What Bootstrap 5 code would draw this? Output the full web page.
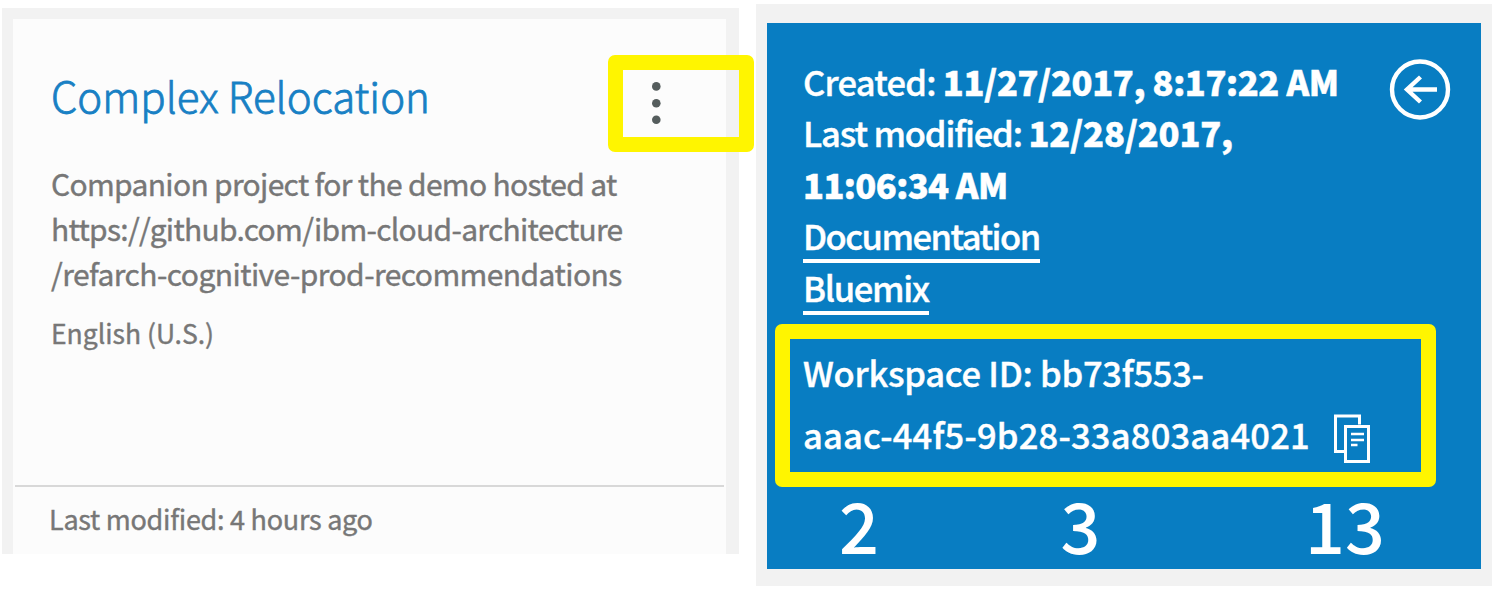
<!DOCTYPE html>
<html lang="en">
<head>
<meta charset="utf-8">
<meta name="viewport" content="width=device-width, initial-scale=1">
<title>Complex Relocation workspace</title>
<link rel="stylesheet" href="https://cdn.jsdelivr.net/npm/bootstrap@5.3.0/dist/css/bootstrap.min.css">
<style>
  body { font-family: "Noto Sans CJK JP", "Noto Sans", sans-serif; height: 592px; overflow: hidden; }
  .ws-front { width: 737px; height: 546px; margin: 8px 0 0 2px; padding: 11px 13px 0 11px; background: #f2f2f2; }
  .ws-face { background: #fcfcfc; height: 535px; }
  .ws-title { color: #1880c4; font-size: 42px; line-height: 60px; font-weight: 300; margin: 46px 0 0 38px; -webkit-text-stroke: .8px #1880c4; }
  .ws-desc { color: #777; font-size: 30px; line-height: 45px; margin: 36px 0 0 38px; -webkit-text-stroke: .4px #777; letter-spacing: -.68px; }
  .ws-url-a { letter-spacing: -.71px; }
  .ws-url-b { letter-spacing: -.57px; }
  .ws-lang { color: #777; font-size: 26.5px; line-height: 40px; margin: 17px 0 0 38px; -webkit-text-stroke: .4px #777; }
  .ws-foot { color: #777; font-size: 27px; line-height: 40px; border-top: 2px solid #d8d8d8; margin: 0 2px; padding: 12px 0 15px 34px; letter-spacing: -.27px; -webkit-text-stroke: .4px #777; }
  .mark-box { border: 15px solid #fff500; border-radius: 7px; }
  .menu-mark { left: 606px; top: 47px; width: 146px; height: 97px; }
  .menu-mark svg { left: 26px; top: 10px; }
  .ws-back { width: 736px; height: 582px; margin: 4px 0 0 17px; padding: 19px 11px 17px; background: #f2f2f2; }
  .ws-blue { background: #087dc2; height: 546px; font-size: 34.5px; font-weight: 500; padding-top: 33px; -webkit-text-stroke: .4px #fff; }
  .ws-info { line-height: 51.4px; padding-left: 36px; height: 257px; }
  .ws-info > div { height: 51.4px; }
  .ws-info b { font-weight: 900; -webkit-text-stroke: .5px #fff; }
  .ws-created { letter-spacing: -.76px; }
  .ws-created b { letter-spacing: -.41px; }
  .ws-modified { letter-spacing: -1.17px; }
  .ws-modified b { letter-spacing: -.2px; }
  .ws-time { letter-spacing: -.6px; }
  .ws-link { color: #fff; text-decoration: none; display: inline-block; height: 53px; border-bottom: 4.5px solid #fff; vertical-align: top; letter-spacing: -1.53px; }
  .ws-link-b { letter-spacing: -1.3px; }
  .back-btn { right: 29px; top: 34px; }
  .id-mark { width: 661px; height: 163px; margin: 11px 0 0 8px; padding: 2px 0 0 13px; line-height: 62px; letter-spacing: -.26px; }
  .id-tail { letter-spacing: .2px; }
  .id-tail svg { margin: 11px 0 -11px 24px; }
  .ws-counts { font-size: 70px; line-height: 80px; font-weight: 500; margin-top: -3px; -webkit-text-stroke: 0; }
  .ws-counts > div:nth-child(1) { width: 184px; }
  .ws-counts > div:nth-child(2) { width: 259px; }
  .ws-counts > div:nth-child(3) { width: 270px; }
</style>
</head>
<body class="bg-white d-flex align-items-start text-nowrap">
  <section class="ws-front position-relative flex-shrink-0">
    <div class="ws-face d-flex flex-column align-items-stretch">
      <h2 class="ws-title">Complex Relocation</h2>
      <div class="ws-desc">
        <div>Companion project for the demo hosted at</div>
        <div class="ws-url-a">https://github.com/ibm-cloud-architecture</div>
        <div class="ws-url-b">/refarch-cognitive-prod-recommendations</div>
      </div>
      <div class="ws-lang">English (U.S.)</div>
      <div class="ws-foot mt-auto">Last modified: 4 hours ago</div>
    </div>
    <div class="mark-box menu-mark position-absolute">
      <svg class="position-absolute" width="14" height="48" fill="#555d5d"><circle cx="7.3" cy="6.4" r="4.3"/><circle cx="7.3" cy="23.2" r="4.3"/><circle cx="7.3" cy="39.8" r="4.3"/></svg>
    </div>
  </section>
  <section class="ws-back flex-shrink-0">
    <div class="ws-blue text-white position-relative">
      <div class="ws-info">
        <div class="ws-created">Created: <b>11/27/2017, 8:17:22 AM</b></div>
        <div class="ws-modified">Last modified: <b>12/28/2017,</b></div>
        <div class="ws-time"><b>11:06:34 AM</b></div>
        <div><a class="ws-link" href="#">Documentation</a></div>
        <div><a class="ws-link ws-link-b" href="#">Bluemix</a></div>
      </div>
      <svg class="back-btn position-absolute" width="64" height="64" fill="none" stroke="#fff" stroke-width="4.4"><circle cx="32" cy="32.5" r="28"/><path d="M49 32.500H18M32.500 20L19 32.500l13.500 12.500"/></svg>
      <div class="id-mark mark-box">
        <div>Workspace ID: bb73f553-</div>
        <div class="id-tail d-flex"><span>aaac-44f5-9b28-33a803aa4021</span>
          <svg width="40" height="56" fill="none" stroke="#fff" stroke-width="3"><path d="M10 37.500H1.500V2h24v8.500M11.500 12.500h23v35h-23z"/><path d="M17 20h13M17 26h13M17 31h6.500" stroke-width="2.500"/></svg>
        </div>
      </div>
      <div class="ws-counts d-flex text-center">
        <div>2</div><div>3</div><div>13</div>
      </div>
    </div>
  </section>
<script src="https://cdn.jsdelivr.net/npm/bootstrap@5.3.0/dist/js/bootstrap.bundle.min.js"></script>
</body>
</html>
